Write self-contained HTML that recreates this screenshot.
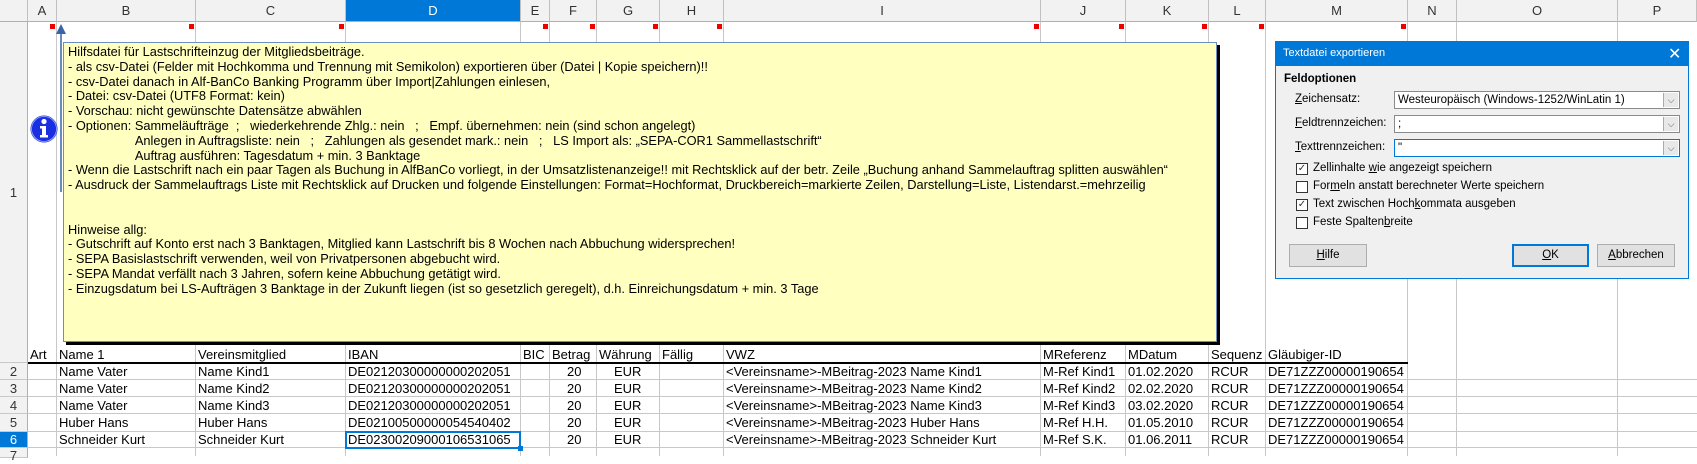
<!DOCTYPE html>
<html><head><meta charset="utf-8"><style>
*{margin:0;padding:0;box-sizing:border-box}
body{width:1697px;height:456px;overflow:hidden;background:#fff;position:relative;font-family:"Liberation Sans",sans-serif}
.a{position:absolute}
.vl{position:absolute;top:22px;bottom:0;width:1px;background:#c8c8c8}
.hl{position:absolute;left:28px;right:0;height:1px;background:#c8c8c8}
.ch{position:absolute;top:0;height:22px;font-size:13px;line-height:22px;text-align:center;color:#333;border-right:1px solid #c0c0c0;border-bottom:1px solid #b0b0b0;background:#f2f2f2}
.rh{position:absolute;left:0;width:28px;font-size:13px;text-align:center;color:#333;background:#f2f2f2;border-right:1px solid #b0b0b0;border-bottom:1px solid #c8c8c8}
.c{position:absolute;font-size:13px;line-height:17px;white-space:nowrap;color:#000}
.rm{position:absolute;top:24px;width:5px;height:5px;background:#e00}
.cm{position:absolute;left:63px;top:42px;width:1154px;height:300px;background:#ffffc0;border:1px solid #6a8fc0;box-shadow:3px 3px 0 #000;font-size:12.8px;line-height:14.8px;padding:2px 0 0 4px;white-space:pre;color:#000}
.dl{position:absolute;font-size:11.5px;color:#000;white-space:nowrap}
.cb{position:absolute;left:1394px;width:286px;height:18px;background:#fff;border:1px solid #8a8a8a;font-size:11.5px;line-height:16px;padding-left:3px}
.cb i{position:absolute;right:1px;top:1px;width:15px;height:14px;background:#e8e8e8;border-left:1px solid #aaa;font-style:normal;font-size:9px;text-align:center;line-height:14px;color:#555}
.ck{position:absolute;left:1296px;width:12px;height:12px;border:1px solid #333;background:#fff;font-size:10px;line-height:10px;text-align:center;color:#333}
.bt{position:absolute;top:244px;height:23px;background:#e1e1e1;border:1px solid #adadad;font-size:11.5px;text-align:center;line-height:21px}
</style></head><body>
<div class="ch" style="left:0;width:28px"></div>
<div class="ch" style="left:28px;width:29px">A</div>
<div class="ch" style="left:57px;width:139px">B</div>
<div class="ch" style="left:196px;width:150px">C</div>
<div class="ch" style="left:346px;width:175px;background:#0078d7;color:#fff">D</div>
<div class="ch" style="left:521px;width:29px">E</div>
<div class="ch" style="left:550px;width:47px">F</div>
<div class="ch" style="left:597px;width:63px">G</div>
<div class="ch" style="left:660px;width:64px">H</div>
<div class="ch" style="left:724px;width:317px">I</div>
<div class="ch" style="left:1041px;width:85px">J</div>
<div class="ch" style="left:1126px;width:83px">K</div>
<div class="ch" style="left:1209px;width:57px">L</div>
<div class="ch" style="left:1266px;width:142px">M</div>
<div class="ch" style="left:1408px;width:49px">N</div>
<div class="ch" style="left:1457px;width:161px">O</div>
<div class="ch" style="left:1618px;width:79px">P</div>
<div class="vl" style="left:56px"></div><div class="vl" style="left:195px"></div><div class="vl" style="left:345px"></div><div class="vl" style="left:520px"></div><div class="vl" style="left:549px"></div><div class="vl" style="left:596px"></div><div class="vl" style="left:659px"></div><div class="vl" style="left:723px"></div><div class="vl" style="left:1040px"></div><div class="vl" style="left:1125px"></div><div class="vl" style="left:1208px"></div><div class="vl" style="left:1265px"></div><div class="vl" style="left:1407px"></div><div class="vl" style="left:1456px"></div><div class="vl" style="left:1617px"></div>
<div class="hl" style="top:379px"></div><div class="hl" style="top:396px"></div><div class="hl" style="top:413px"></div><div class="hl" style="top:431px"></div><div class="hl" style="top:447px"></div>
<div class="a" style="left:28px;top:362px;width:1380px;height:2px;background:#000"></div>
<div class="rh" style="top:22px;height:341px;line-height:341px">1</div>
<div class="rh" style="top:363px;height:17px;line-height:17px">2</div>
<div class="rh" style="top:380px;height:17px;line-height:17px">3</div>
<div class="rh" style="top:397px;height:17px;line-height:17px">4</div>
<div class="rh" style="top:414px;height:18px;line-height:18px">5</div>
<div class="rh" style="top:432px;height:16px;line-height:16px;background:#0078d7;color:#fff">6</div>
<div class="rh" style="top:448px;height:10px;line-height:16px">7</div>
<div class="rm" style="left:50px"></div><div class="rm" style="left:189px"></div><div class="rm" style="left:339px"></div><div class="rm" style="left:543px"></div><div class="rm" style="left:590px"></div><div class="rm" style="left:653px"></div><div class="rm" style="left:717px"></div><div class="rm" style="left:1034px"></div><div class="rm" style="left:1119px"></div><div class="rm" style="left:1202px"></div><div class="rm" style="left:1259px"></div><div class="rm" style="left:1401px"></div>
<div class="c" style="top:346px;left:30px">Art</div>
<div class="c" style="top:346px;left:59px">Name 1</div>
<div class="c" style="top:346px;left:198px">Vereinsmitglied</div>
<div class="c" style="top:346px;left:348px">IBAN</div>
<div class="c" style="top:346px;left:523px">BIC</div>
<div class="c" style="top:346px;left:552px">Betrag</div>
<div class="c" style="top:346px;left:599px">Währung</div>
<div class="c" style="top:346px;left:662px">Fällig</div>
<div class="c" style="top:346px;left:726px">VWZ</div>
<div class="c" style="top:346px;left:1043px">MReferenz</div>
<div class="c" style="top:346px;left:1128px">MDatum</div>
<div class="c" style="top:346px;left:1211px">Sequenz</div>
<div class="c" style="top:346px;left:1268px">Gläubiger-ID</div>
<div class="c" style="top:363px;left:59px">Name Vater</div><div class="c" style="top:363px;left:198px">Name Kind1</div><div class="c" style="top:363px;left:348px">DE02120300000000202051</div><div class="c" style="top:363px;left:567px">20</div><div class="c" style="top:363px;left:614px">EUR</div><div class="c" style="top:363px;left:726px">&lt;Vereinsname&gt;-MBeitrag-2023 Name Kind1</div><div class="c" style="top:363px;left:1043px">M-Ref Kind1</div><div class="c" style="top:363px;left:1128px">01.02.2020</div><div class="c" style="top:363px;left:1211px">RCUR</div><div class="c" style="top:363px;left:1268px">DE71ZZZ00000190654</div>
<div class="c" style="top:380px;left:59px">Name Vater</div><div class="c" style="top:380px;left:198px">Name Kind2</div><div class="c" style="top:380px;left:348px">DE02120300000000202051</div><div class="c" style="top:380px;left:567px">20</div><div class="c" style="top:380px;left:614px">EUR</div><div class="c" style="top:380px;left:726px">&lt;Vereinsname&gt;-MBeitrag-2023 Name Kind2</div><div class="c" style="top:380px;left:1043px">M-Ref Kind2</div><div class="c" style="top:380px;left:1128px">02.02.2020</div><div class="c" style="top:380px;left:1211px">RCUR</div><div class="c" style="top:380px;left:1268px">DE71ZZZ00000190654</div>
<div class="c" style="top:397px;left:59px">Name Vater</div><div class="c" style="top:397px;left:198px">Name Kind3</div><div class="c" style="top:397px;left:348px">DE02120300000000202051</div><div class="c" style="top:397px;left:567px">20</div><div class="c" style="top:397px;left:614px">EUR</div><div class="c" style="top:397px;left:726px">&lt;Vereinsname&gt;-MBeitrag-2023 Name Kind3</div><div class="c" style="top:397px;left:1043px">M-Ref Kind3</div><div class="c" style="top:397px;left:1128px">03.02.2020</div><div class="c" style="top:397px;left:1211px">RCUR</div><div class="c" style="top:397px;left:1268px">DE71ZZZ00000190654</div>
<div class="c" style="top:414px;left:59px">Huber Hans</div><div class="c" style="top:414px;left:198px">Huber Hans</div><div class="c" style="top:414px;left:348px">DE02100500000054540402</div><div class="c" style="top:414px;left:567px">20</div><div class="c" style="top:414px;left:614px">EUR</div><div class="c" style="top:414px;left:726px">&lt;Vereinsname&gt;-MBeitrag-2023 Huber Hans</div><div class="c" style="top:414px;left:1043px">M-Ref H.H.</div><div class="c" style="top:414px;left:1128px">01.05.2010</div><div class="c" style="top:414px;left:1211px">RCUR</div><div class="c" style="top:414px;left:1268px">DE71ZZZ00000190654</div>
<div class="c" style="top:431px;left:59px">Schneider Kurt</div><div class="c" style="top:431px;left:198px">Schneider Kurt</div><div class="c" style="top:431px;left:348px">DE02300209000106531065</div><div class="c" style="top:431px;left:567px">20</div><div class="c" style="top:431px;left:614px">EUR</div><div class="c" style="top:431px;left:726px">&lt;Vereinsname&gt;-MBeitrag-2023 Schneider Kurt</div><div class="c" style="top:431px;left:1043px">M-Ref S.K.</div><div class="c" style="top:431px;left:1128px">01.06.2011</div><div class="c" style="top:431px;left:1211px">RCUR</div><div class="c" style="top:431px;left:1268px">DE71ZZZ00000190654</div>
<div class="a" style="left:345px;top:431px;width:176px;height:18px;border:2px solid #0078d7"></div>
<div class="a" style="left:518px;top:446px;width:5px;height:5px;background:#0078d7"></div>
<svg class="a" style="left:0;top:0" width="80" height="360"><line x1="61" y1="28" x2="61" y2="192" stroke="#3a64a8" stroke-width="1.5"/><path d="M56 34 L61 24 L66 34 Z" fill="#3a64a8"/>
<circle cx="44" cy="129" r="13.5" fill="#1a30e0"/><circle cx="44" cy="129" r="12.5" fill="none" stroke="#9fb0ff" stroke-width="0.8"/><circle cx="44" cy="121.5" r="2.6" fill="#fff"/><path d="M40 126 h6 v9 h2 v2.5 h-8 v-2.5 h2 v-6.5 h-2 z" fill="#fff"/></svg>
<div class="cm">Hilfsdatei für Lastschrifteinzug der Mitgliedsbeiträge.
- als csv-Datei (Felder mit Hochkomma und Trennung mit Semikolon) exportieren über (Datei | Kopie speichern)!!
- csv-Datei danach in Alf-BanCo Banking Programm über Import|Zahlungen einlesen,
- Datei: csv-Datei (UTF8 Format: kein)
- Vorschau: nicht gewünschte Datensätze abwählen
- Optionen: Sammeläufträge  ;   wiederkehrende Zhlg.: nein   ;   Empf. übernehmen: nein (sind schon angelegt)
                   Anlegen in Auftragsliste: nein   ;   Zahlungen als gesendet mark.: nein   ;   LS Import als: „SEPA-COR1 Sammellastschrift“
                   Auftrag ausführen: Tagesdatum + min. 3 Banktage
- Wenn die Lastschrift nach ein paar Tagen als Buchung in AlfBanCo vorliegt, in der Umsatzlistenanzeige!! mit Rechtsklick auf der betr. Zeile „Buchung anhand Sammelauftrag splitten auswählen“
- Ausdruck der Sammelauftrags Liste mit Rechtsklick auf Drucken und folgende Einstellungen: Format=Hochformat, Druckbereich=markierte Zeilen, Darstellung=Liste, Listendarst.=mehrzeilig


Hinweise allg:
- Gutschrift auf Konto erst nach 3 Banktagen, Mitglied kann Lastschrift bis 8 Wochen nach Abbuchung widersprechen!
- SEPA Basislastschrift verwenden, weil von Privatpersonen abgebucht wird.
- SEPA Mandat verfällt nach 3 Jahren, sofern keine Abbuchung getätigt wird.
- Einzugsdatum bei LS-Aufträgen 3 Banktage in der Zukunft liegen (ist so gesetzlich geregelt), d.h. Einreichungsdatum + min. 3 Tage</div>
<div class="a" style="left:1275px;top:41px;width:414px;height:238px;background:#f0f0f0;border:1px solid #0078d7"></div>
<div class="a" style="left:1275px;top:41px;width:414px;height:25px;background:#0078d7"></div>
<div class="dl" style="left:1283px;top:47px;color:#fff;font-size:11px">Textdatei exportieren</div>
<div class="dl" style="left:1668px;top:44px;color:#fff;font-size:16px">✕</div>
<div class="dl" style="left:1284px;top:73px;font-weight:bold">Feldoptionen</div>
<div class="dl" style="left:1295px;top:93px"><u>Z</u>eichensatz:</div>
<div class="dl" style="left:1295px;top:117px"><u>F</u>eldtrennzeichen:</div>
<div class="dl" style="left:1295px;top:141px"><u>T</u>exttrennzeichen:</div>
<div class="cb" style="top:91px">Westeuropäisch (Windows-1252/WinLatin 1)<i>⌵</i></div>
<div class="cb" style="top:115px">;<i>⌵</i></div>
<div class="cb" style="top:139px;border-color:#0078d7">"<i>⌵</i></div>
<div class="ck" style="top:163px">✓</div><div class="dl" style="left:1313px;top:162px">Zellinhalte <u>w</u>ie angezeigt speichern</div>
<div class="ck" style="top:181px"></div><div class="dl" style="left:1313px;top:180px">For<u>m</u>eln anstatt berechneter Werte speichern</div>
<div class="ck" style="top:199px">✓</div><div class="dl" style="left:1313px;top:198px">Text zwischen Hoch<u>k</u>ommata ausgeben</div>
<div class="ck" style="top:217px"></div><div class="dl" style="left:1313px;top:216px">Feste Spalten<u>b</u>reite</div>
<div class="bt" style="left:1289px;width:78px"><u>H</u>ilfe</div>
<div class="bt" style="left:1512px;width:77px;border:2px solid #0078d7;line-height:19px"><u>O</u>K</div>
<div class="bt" style="left:1597px;width:78px"><u>A</u>bbrechen</div>
</body></html>
